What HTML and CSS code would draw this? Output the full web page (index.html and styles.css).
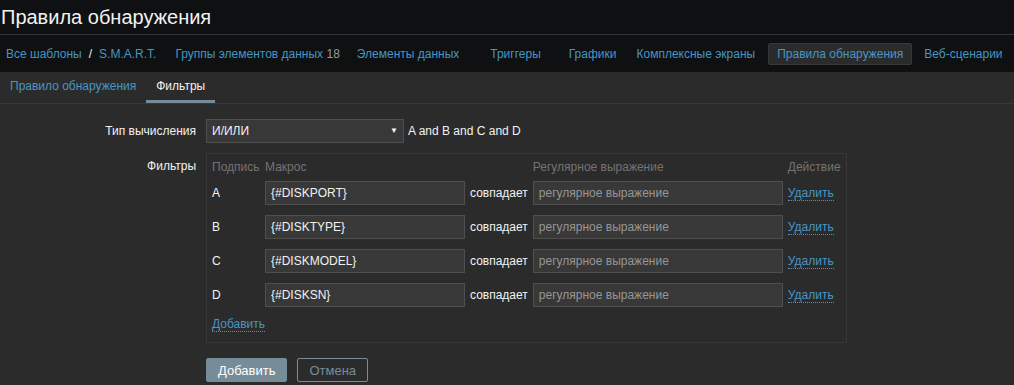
FILE: index.html
```html
<!DOCTYPE html>
<html lang="ru">
<head>
    <meta charset="UTF-8">
    <title>Правила обнаружения</title>
    <link rel="stylesheet" href="styles.css">
</head>
<body>
    <div class="header-title">
        <h1>Правила обнаружения</h1>
    </div>
    <ul class="object-group">
        <li class="crumbs"><a href="#">Все шаблоны</a><span class="sep">/</span><a href="#">S.M.A.R.T.</a></li>
        <li class="g19"><a href="#">Группы элементов данных</a> <span class="count">18</span></li>
        <li class="g17"><a href="#">Элементы данных</a></li>
        <li class="g31"><a href="#">Триггеры</a></li>
        <li class="g28"><a href="#">Графики</a></li>
        <li class="g20"><a href="#">Комплексные экраны</a></li>
        <li class="g13 selected"><a href="#">Правила обнаружения</a></li>
        <li class="g12"><a href="#">Веб-сценарии</a></li>
    </ul>
    <ul class="tabs">
        <li><a href="#">Правило обнаружения</a></li>
        <li class="active"><a href="#">Фильтры</a></li>
    </ul>

    <form class="form-list">
        <label class="form-label">Тип вычисления</label>
        <div class="form-field">
            <div class="select">
                <span>И/ИЛИ</span>
                <span class="arrow">▼</span>
            </div>
            <span class="formula">A and B and C and D</span>
        </div>

        <label class="form-label top">Фильтры</label>
        <div class="form-field">
            <div class="filter-box">
                <table class="filter-table">
                    <thead>
                        <tr>
                            <th class="c-label">Подпись</th>
                            <th class="c-macro">Макрос</th>
                            <th class="c-op"></th>
                            <th class="c-value">Регулярное выражение</th>
                            <th class="c-action">Действие</th>
                        </tr>
                    </thead>
                    <tbody>
                        <tr>
                            <td>A</td>
                            <td><input type="text" value="{#DISKPORT}"></td>
                            <td>совпадает</td>
                            <td><input class="wide" type="text" placeholder="регулярное выражение"></td>
                            <td class="c-action"><a class="link-action" href="#">Удалить</a></td>
                        </tr>
                        <tr>
                            <td>B</td>
                            <td><input type="text" value="{#DISKTYPE}"></td>
                            <td>совпадает</td>
                            <td><input class="wide" type="text" placeholder="регулярное выражение"></td>
                            <td class="c-action"><a class="link-action" href="#">Удалить</a></td>
                        </tr>
                        <tr>
                            <td>C</td>
                            <td><input type="text" value="{#DISKMODEL}"></td>
                            <td>совпадает</td>
                            <td><input class="wide" type="text" placeholder="регулярное выражение"></td>
                            <td class="c-action"><a class="link-action" href="#">Удалить</a></td>
                        </tr>
                        <tr>
                            <td>D</td>
                            <td><input type="text" value="{#DISKSN}"></td>
                            <td>совпадает</td>
                            <td><input class="wide" type="text" placeholder="регулярное выражение"></td>
                            <td class="c-action"><a class="link-action" href="#">Удалить</a></td>
                        </tr>
                        <tr class="add-row">
                            <td colspan="5"><a class="link-action" href="#">Добавить</a></td>
                        </tr>
                    </tbody>
                </table>
            </div>
        </div>

        <div class="form-field buttons">
            <button type="button" class="btn-main">Добавить</button>
            <button type="button" class="btn-alt">Отмена</button>
        </div>
    </form>
</body>
</html>
```

FILE: styles.css
```css
body { margin: 0; background-color: #2b2b2b; color: #f2f2f2; font-family: "Liberation Sans", Arial, sans-serif; font-size: 12px; line-height: 14px; }
a { color: #4796c4; text-decoration: none; }
ul { list-style: none; margin: 0; padding: 0; }

.header-title { height: 34px; background-color: #0e1012; border-bottom: 1px solid #303234; }
.header-title h1 { margin: 0; padding-left: 1px; font-size: 20px; font-weight: normal; line-height: 34px; color: #f2f2f2; }

.object-group { display: flex; align-items: center; height: 37px; background-color: #0e1012; padding-left: 6px; }
.object-group li { line-height: 14px; }
.object-group .sep { color: #f2f2f2; margin: 0 7px; }
.object-group .count { color: #9a9a9a; }
.object-group .g12 { margin-left: 12px; }
.object-group .g13 { margin-left: 13px; }
.object-group .g17 { margin-left: 17px; }
.object-group .g19 { margin-left: 19px; }
.object-group .g20 { margin-left: 20px; }
.object-group .g28 { margin-left: 28px; }
.object-group .g31 { margin-left: 31px; }
.object-group .selected { background-color: #2b2b2b; border: 1px solid #383838; padding: 3px 8px; border-radius: 2px; }

.tabs { display: flex; height: 31px; border-bottom: 1px solid #383838; }
.tabs li { padding: 0 10px; line-height: 28px; border-bottom: 3px solid transparent; }
.tabs li.active { border-bottom-color: #768d99; }
.tabs li.active a { color: #f2f2f2; }

.form-list { display: grid; grid-template-columns: 196px 1fr; column-gap: 10px; row-gap: 10px; margin-top: 15px; }
.form-label { text-align: right; line-height: 24px; }
.form-label.top { line-height: 14px; padding-top: 6px; }
.form-field { display: flex; align-items: center; }

.select { display: flex; justify-content: space-between; align-items: center; box-sizing: border-box; width: 198px; height: 24px; padding: 0 5px; background-color: #383838; border: 1px solid #4f4f4f; }
.select .arrow { font-size: 8px; color: #f2f2f2; }
.formula { margin-left: 4px; }

.filter-box { border: 1px solid #383838; padding: 5px; }
.filter-table { border-collapse: collapse; }
.filter-table th { padding: 1px 5px 2px 0; text-align: left; font-weight: normal; color: #737373; white-space: nowrap; }
.filter-table td { padding: 5px 5px 5px 0; white-space: nowrap; }
.filter-table .c-label { width: 48px; }
.filter-table .c-action { padding-right: 0; }
.filter-table .add-row td { padding-bottom: 6px; }

input { box-sizing: border-box; width: 200px; height: 24px; margin: 0; padding: 0 5px; background-color: #383838; border: 1px solid #4f4f4f; color: #f2f2f2; font-family: inherit; font-size: 12px; outline: none; }
input.wide { width: 250px; }
input::placeholder { color: #969696; }

.link-action { border-bottom: 1px dotted #4796c4; }

.buttons { grid-column: 2; margin-top: 5px; }
.buttons button { height: 24px; margin-right: 10px; padding: 0 11px; border: 1px solid #768d99; border-radius: 2px; font-family: inherit; font-size: 13px; cursor: pointer; }
.btn-main { background-color: #768d99; color: #ffffff; }
.btn-alt { background-color: transparent; color: #768d99; }
```
